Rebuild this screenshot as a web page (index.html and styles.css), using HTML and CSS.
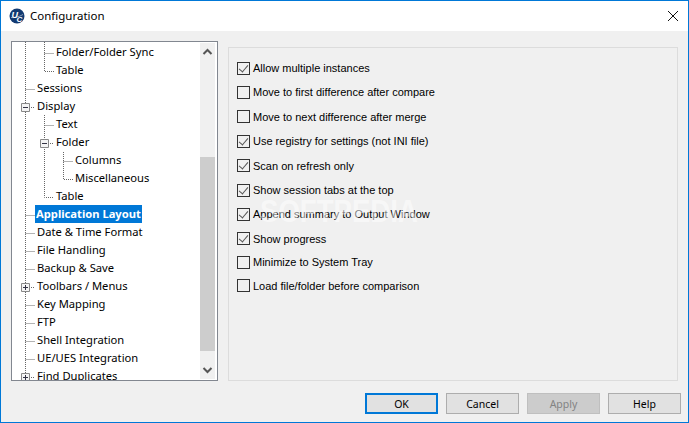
FILE: index.html
```html
<!DOCTYPE html>
<html lang="en">
<head>
<meta charset="utf-8">
<title>Configuration</title>
<link rel="stylesheet" href="styles.css">
</head>
<body>
<div class="window">
  <header class="titlebar">
    <svg class="app-icon" width="16" height="16" viewBox="0 0 16 16"><circle cx="8" cy="8" r="7.5" fill="#123a72"/><path d="M2 9.5c3 .5 8-.5 12-3" stroke="#fff" stroke-width=".5" fill="none"/><text x="2.4" y="9.5" class="icon-u">U</text><text x="7.6" y="13.5" class="icon-c">C</text></svg>
    <span class="title">Configuration</span>
    <svg class="close" width="10" height="10" viewBox="0 0 10 10"><path d="M0 0l10 10M10 0L0 10" stroke="#111" stroke-width="1" fill="none"/></svg>
  </header>
  <main class="content">
    <div class="panes">
      <nav class="tree">
        <div class="tree-rows">
          <div class="row l2">Folder/Folder Sync</div>
          <div class="row l2">Table</div>
          <div class="row l1">Sessions</div>
          <div class="row l1">Display</div>
          <div class="row l2">Text</div>
          <div class="row l2">Folder</div>
          <div class="row l3">Columns</div>
          <div class="row l3">Miscellaneous</div>
          <div class="row l2">Table</div>
          <div class="row l1"><span class="selected">Application Layout</span></div>
          <div class="row l1">Date &amp; Time Format</div>
          <div class="row l1">File Handling</div>
          <div class="row l1">Backup &amp; Save</div>
          <div class="row l1">Toolbars / Menus</div>
          <div class="row l1">Key Mapping</div>
          <div class="row l1">FTP</div>
          <div class="row l1">Shell Integration</div>
          <div class="row l1">UE/UES Integration</div>
          <div class="row l1">Find Duplicates</div>
        </div>
        <svg class="tree-lines" width="190" height="338" viewBox="0 0 190 338">
          <g class="dots">
            <path d="M13.5 0V332"/>
            <path d="M32.5 0V29.5H42M32.5 11.5H42"/>
            <path d="M13.5 47.5H23M19 65.5H23"/>
            <path d="M32.5 73V155.5H42M32.5 83.5H42M38 101.5H42"/>
            <path d="M51.5 110V137.5H61M51.5 119.5H61"/>
            <path d="M13.5 173.5H23M13.5 191.5H23M13.5 209.5H23M13.5 227.5H23M19 245.5H23M13.5 263.5H23M13.5 281.5H23M13.5 299.5H23M13.5 317.5H23M19 335.5H23"/>
          </g>
          <g class="expander">
            <path class="box" d="M9.5 61.5h8v8h-8z"/><path class="sign" d="M11 65.5h5"/>
            <path class="box" d="M28.5 97.5h8v8h-8z"/><path class="sign" d="M30 101.5h5"/>
            <path class="box" d="M9.5 241.5h8v8h-8z"/><path class="sign" d="M11 245.5h5M13.5 243v5"/>
            <path class="box" d="M9.5 331.5h8v8h-8z"/><path class="sign" d="M11 335.5h5M13.5 333v5"/>
          </g>
        </svg>
        <div class="scrollbar">
          <svg width="15" height="17" viewBox="0 0 15 17"><path d="M3.5 11l4-4 4 4" stroke="#555" stroke-width="2" fill="none"/></svg>
          <div class="track"><div class="thumb"></div></div>
          <svg width="15" height="17" viewBox="0 0 15 17"><path d="M3.5 6l4 4 4-4" stroke="#555" stroke-width="2" fill="none"/></svg>
        </div>
      </nav>
      <section class="options">
        <label class="opt"><span class="box on"></span>Allow multiple instances</label>
        <label class="opt"><span class="box"></span>Move to first difference after compare</label>
        <label class="opt wide"><span class="box"></span>Move to next difference after merge</label>
        <label class="opt"><span class="box on"></span>Use registry for settings (not INI file)</label>
        <label class="opt wide"><span class="box on"></span>Scan on refresh only</label>
        <label class="opt"><span class="box on"></span>Show session tabs at the top</label>
        <label class="opt"><span class="box on"></span>Append summary to Output Window</label>
        <label class="opt wide"><span class="box on"></span>Show progress</label>
        <label class="opt narrow"><span class="box"></span>Minimize to System Tray</label>
        <label class="opt wide"><span class="box"></span>Load file/folder before comparison</label>
        <span class="watermark">SOFTPEDIA</span>
      </section>
    </div>
    <footer class="buttons">
      <button class="btn default">OK</button>
      <button class="btn">Cancel</button>
      <button class="btn disabled">Apply</button>
      <button class="btn">Help</button>
    </footer>
  </main>
</div>
</body>
</html>
```
FILE: styles.css
```css
* { box-sizing: border-box; }
html, body { margin: 0; padding: 0; }
body { width: 689px; height: 423px; overflow: hidden; font-family: "Noto Sans", sans-serif; font-size: 11px; color: #000; }
.window { width: 689px; height: 423px; border: 1px solid #0078d7; display: flex; flex-direction: column; background: #f0f0f0; }
.titlebar { height: 30px; background: #fff; display: flex; align-items: center; padding: 0 10px 0 8px; flex: none; }
.app-icon { flex: none; margin-bottom: 1px; }
.icon-u { font: italic bold 9px "Liberation Sans", sans-serif; fill: #fff; }
.icon-c { font: italic bold 8px "Liberation Sans", sans-serif; fill: #fff; }
.title { margin-left: 5px; font-size: 11.5px; flex: 1; padding-bottom: 2px; }
.content { flex: 1; display: flex; flex-direction: column; padding: 10px 10px 0; min-height: 0; }
.panes { display: flex; gap: 10px; height: 340px; flex: none; }
.tree { width: 207px; height: 340px; border: 1px solid #828790; background: #fff; position: relative; overflow: hidden; flex: none; display: flex; font-size: 11.2px; }
.tree-rows { flex: 1; padding-top: 1px; overflow: hidden; }
.row { height: 18px; line-height: 18px; white-space: nowrap; }
.l1 { padding-left: 25px; }
.l2 { padding-left: 44px; }
.l3 { padding-left: 63px; }
.selected { display: inline-block; margin-left: -2px; background: #0078d7; color: #fff; font-weight: 700; height: 18px; padding: 0 1px; }
.tree-lines { position: absolute; left: 0; top: 0; pointer-events: none; }
.dots path { stroke: #666; stroke-width: 1; stroke-dasharray: 1 1; fill: none; }
.expander .box { fill: #f4f4f4; stroke: #888; }
.expander .sign { stroke: #334; fill: none; }
.scrollbar { width: 15px; margin: 1px 2px 1px 0; background: #f0f0f0; display: flex; flex-direction: column; flex: none; }
.scrollbar svg { flex: none; }
.track { flex: 1; padding-top: 97px; padding-bottom: 11px; display: flex; }
.thumb { flex: 1; background: #cdcdcd; }
.options { flex: 1; height: 334px; margin-top: 6px; border: 1px solid #dcdcdc; padding-top: 8px; display: flex; flex-direction: column; position: relative; font-family: "Liberation Sans", sans-serif; }
.opt { height: 24px; display: flex; align-items: center; padding-left: 8px; gap: 3px; white-space: nowrap; flex: none; }
.opt.wide { height: 25px; }
.opt.narrow { height: 22px; }
.box { width: 13px; height: 13px; border: 1px solid #333; background: transparent; flex: none; position: relative; }
.box.on::after { content: ""; position: absolute; left: 3px; top: 0; width: 4px; height: 8px; border: solid #555; border-width: 0 1.5px 1.5px 0; transform: rotate(40deg); }
.watermark { position: absolute; left: 31px; top: 146px; font: 700 31px "Liberation Sans", sans-serif; color: rgba(255,255,255,.5); transform: scaleX(.89); transform-origin: left top; pointer-events: none; }
.buttons { display: flex; justify-content: flex-end; gap: 8px; padding-top: 12px; margin-right: -3px; }
.btn { width: 73px; height: 21px; background: #e1e1e1; border: 1px solid #adadad; font: inherit; font-size: 10.5px; color: #000; padding: 0; }
.btn.default { border: 2px solid #0078d7; }
.btn.disabled { background: #cccccc; border-color: #bfbfbf; color: #838383; }
```
